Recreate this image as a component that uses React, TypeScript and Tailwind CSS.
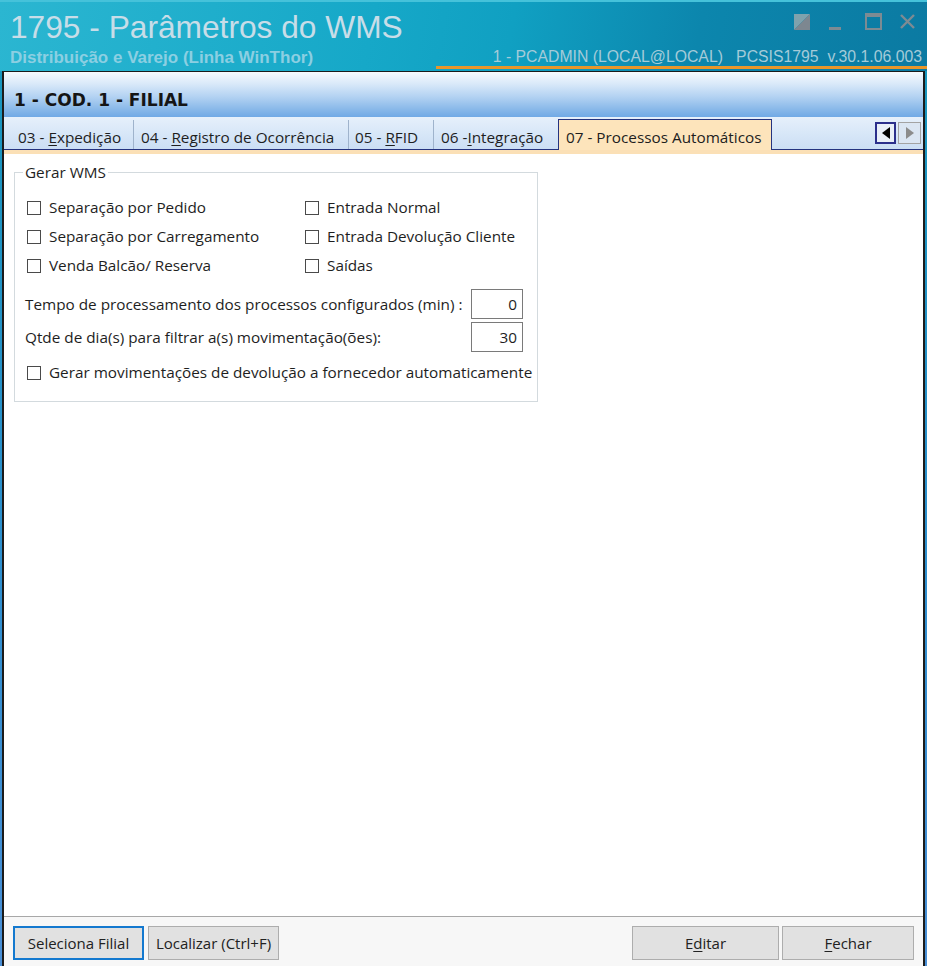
import React from "react";

const U = ({ children }: { children: React.ReactNode }) => (
  <span className="underline underline-offset-[2px] decoration-1">{children}</span>
);

function Check({ label }: { label: string }) {
  return (
    <div className="flex items-center h-[29px]">
      <span className="w-[14px] h-[14px] border border-[#4a4a4a] bg-white shrink-0" />
      <span className="ml-[8px] whitespace-nowrap">{label}</span>
    </div>
  );
}

function NumField({ label, value }: { label: string; value: string }) {
  return (
    <div className="flex items-center w-[496px] h-[30px]">
      <span className="whitespace-nowrap -ml-[2px]">{label}</span>
      <div className="ml-auto w-[52px] h-[30px] border border-[#7a7a7a] bg-white flex items-center justify-end pr-[5px]">
        {value}
      </div>
    </div>
  );
}

export default function App() {
  return (
    <div className="w-[927px] h-[966px] flex flex-col overflow-hidden bg-[linear-gradient(180deg,#1597bb_0%,#2f8fcf_60%,#4a8fd6_100%)] font-['Open_Sans',sans-serif] text-[15.3px] text-[#1e1e1e]">
      {/* Header */}
      <div className="h-[71px] shrink-0 flex bg-[linear-gradient(100deg,#2bb6d1_0%,#16a8c8_40%,#10a0c2_55%,#0c86ad_75%,#0b7aa2_100%)] border-t-[2px] border-[#45c2da]">
        <div className="flex-1 pl-[10px] pt-[7px] font-['Liberation_Sans',Arial,sans-serif]">
          <div className="text-[31.7px] leading-[36px] text-[#c8dde8] whitespace-nowrap">1795 - Parâmetros do WMS</div>
          <div className="text-[17px] leading-[20px] font-bold text-[#8ccfe2] whitespace-nowrap mt-[3px]">
            Distribuição e Varejo (Linha WinThor)
          </div>
        </div>
        <div className="w-[491px] h-[67px] border-b-[3px] border-[#e8962a] flex flex-col items-end pr-[5px] font-['Liberation_Sans',Arial,sans-serif]">
          <div className="flex items-center mt-[11px] mr-[6px] h-[17px]">
            <svg width="16" height="16" viewBox="0 0 16 16" className="mr-[19px]">
              <polygon points="0,0 16,0 0,16" fill="#7fa2ad" />
              <polygon points="16,0 16,16 0,16" fill="#7d8790" />
            </svg>
            <svg width="12" height="17" viewBox="0 0 12 17" className="mr-[24px]">
              <rect x="0" y="14" width="12" height="3" fill="#7d8b93" />
            </svg>
            <svg width="17" height="17" viewBox="0 0 17 17" className="mr-[17px]">
              <rect x="1" y="1" width="15" height="15" fill="none" stroke="#7d8b93" strokeWidth="2" />
              <rect x="1" y="1" width="15" height="3" fill="#7d8b93" />
            </svg>
            <svg width="17" height="17" viewBox="0 0 17 17">
              <path d="M2 2 L15 15 M15 2 L2 15" stroke="#7d8b93" strokeWidth="2.4" />
            </svg>
          </div>
          <div className="mt-auto text-[15.8px] leading-[18px] text-[#a4cbd9] whitespace-pre">
            {"1 - PCADMIN (LOCAL@LOCAL)   PCSIS1795  v.30.1.06.003"}
          </div>
        </div>
      </div>

      {/* Main panel */}
      <div className="flex-1 min-h-0 mx-[2px] border-x-2 border-t border-[#1b1b1b] bg-white flex flex-col">
        <div className="h-[45px] shrink-0 bg-[linear-gradient(180deg,#f6fafe_0%,#dbeaf9_25%,#b3d2f2_55%,#8dbbea_80%,#70a9e5_100%)] pl-[10px] pt-[17px]">
          <span className="font-['DejaVu_Sans',sans-serif] font-bold text-[17px] leading-[20px] text-[#151515]">
            1 - COD. 1 - FILIAL
          </span>
        </div>

        {/* Tabs */}
        <div className="h-[33px] shrink-0 flex items-end border-b border-[#25337f] bg-[linear-gradient(180deg,#e6f0fb_0%,#d8e7f8_50%,#cbdef4_100%)]">
          <div className="w-[130px] h-[29px] pt-[6px] pl-[14px] flex items-center border-r border-[#9fb3cc] whitespace-nowrap">
            <span>03 - <U>E</U>xpedição</span>
          </div>
          <div className="w-[215px] h-[29px] pt-[6px] pl-[7px] flex items-center border-r border-[#9fb3cc] whitespace-nowrap">
            <span>04 - <U>R</U>egistro de Ocorrência</span>
          </div>
          <div className="w-[85px] h-[29px] pt-[6px] pl-[6px] flex items-center border-r border-[#9fb3cc] whitespace-nowrap">
            <span>05 - <U>R</U>FID</span>
          </div>
          <div className="w-[124px] h-[29px] pt-[6px] pl-[7px] flex items-center whitespace-nowrap">
            <span>06 -<U>I</U>ntegração</span>
          </div>
          <div className="w-[214px] h-[31px] -mb-[1px] pt-[5px] pl-[7px] flex items-center border-x border-t border-[#25337f] bg-[#fde4bb] whitespace-nowrap">
            <span>07 - Processos Automáticos</span>
          </div>
          <div className="ml-auto mr-[2px] mb-[5px] flex gap-[2px]">
            <div className="w-[21px] h-[22px] border-2 border-[#2b2f8c] bg-[#e9eff8] flex items-center justify-center">
              <svg width="8" height="12" viewBox="0 0 8 12">
                <polygon points="8,0 8,12 0,6" fill="#000" />
              </svg>
            </div>
            <div className="w-[23px] h-[22px] border border-[#a3a3a3] bg-[#dbe6f3] flex items-center justify-center">
              <svg width="8" height="12" viewBox="0 0 8 12">
                <polygon points="0,0 0,12 8,6" fill="#8c8c8c" />
              </svg>
            </div>
          </div>
        </div>
        <div className="h-[4px] shrink-0 bg-[#fbe0b6]" />

        {/* Content */}
        <div className="flex-1 min-h-0 bg-white">
          <fieldset className="mt-[8px] ml-[10px] w-[524px] min-w-0 border border-[#d3dade] pl-[12px] pr-[12px] pb-[14px]">
            <legend className="-ml-[4px] px-[2px] leading-[20px]">Gerar WMS</legend>
            <div className="flex mt-[11px]">
              <div className="w-[278px]">
                <Check label="Separação por Pedido" />
                <Check label="Separação por Carregamento" />
                <Check label="Venda Balcão/ Reserva" />
              </div>
              <div>
                <Check label="Entrada Normal" />
                <Check label="Entrada Devolução Cliente" />
                <Check label="Saídas" />
              </div>
            </div>
            <div className="mt-[9px] flex flex-col gap-[3px]">
              <NumField label="Tempo de processamento dos processos configurados (min) :" value="0" />
              <NumField label="Qtde de dia(s) para filtrar a(s) movimentação(ões):" value="30" />
            </div>
            <div className="mt-[6px]">
              <Check label="Gerar movimentações de devolução a fornecedor automaticamente" />
            </div>
          </fieldset>
        </div>

        {/* Bottom bar */}
        <div className="h-[50px] shrink-0 border-t border-[#a8a8a8] bg-[#f7f7f7] flex items-start pt-[9px] px-[9px] text-[15px]">
          <button className="w-[131px] h-[34px] border-2 border-[#1479cf] bg-[#e1e1e1] text-[#222]">Seleciona Filial</button>
          <button className="ml-[4px] w-[131px] h-[34px] border border-[#adadad] bg-[#e1e1e1] text-[#222]">Localizar (Ctrl+F)</button>
          <button className="ml-auto w-[147px] h-[34px] border border-[#adadad] bg-[#e1e1e1] text-[#222]">
            <span>E<U>d</U>itar</span>
          </button>
          <button className="ml-[3px] w-[132px] h-[34px] border border-[#adadad] bg-[#e1e1e1] text-[#222]">
            <span><U>F</U>echar</span>
          </button>
        </div>
      </div>
    </div>
  );
}
